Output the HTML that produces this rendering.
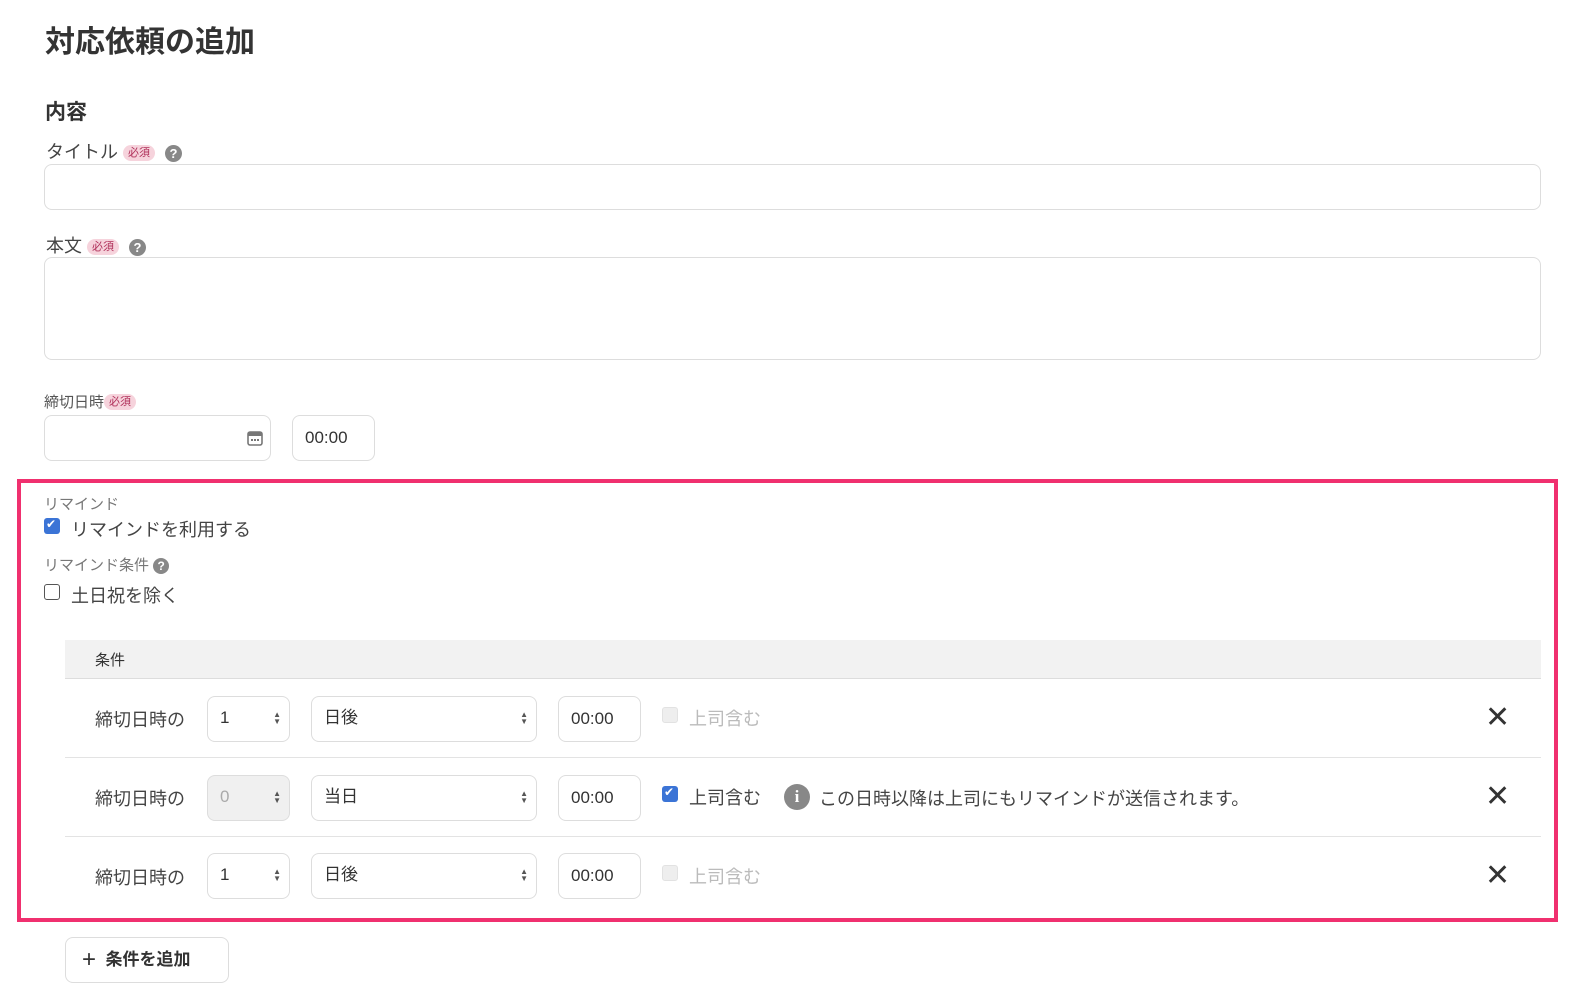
<!DOCTYPE html>
<html><head><meta charset="utf-8"><style>
*{box-sizing:border-box;margin:0;padding:0}
body{width:1576px;height:997px;background:#fff;font-family:"Liberation Sans","Noto Sans CJK JP",sans-serif;color:#333;position:relative;overflow:hidden}
.a{position:absolute}
.inp{position:absolute;border:1px solid #ddd;border-radius:8px;background:#fff}
.req{display:inline-block;background:#f6d3dc;color:#b0305a;font-size:11px;border-radius:8px;padding:0 5px;line-height:16px;vertical-align:2px}
.q{display:inline-block;width:17px;height:17px;border-radius:50%;background:#888;color:#fff;font-size:13px;font-weight:bold;text-align:center;line-height:17px;vertical-align:0}
.lbl{font-size:18px;color:#444}
.sel{font-size:17px;color:#333;padding-left:12px;line-height:44px}
.arr{position:absolute;right:8px;top:14px;font-size:8px;line-height:7px;color:#555}
.cb{position:absolute;width:16px;height:16px;border-radius:3px}
.x{position:absolute;left:1485px;font-size:30px;color:#333;line-height:30px}
</style></head><body>
<div class="a" style="left:45px;top:17px;font-size:30px;font-weight:bold;color:#333">対応依頼の追加</div>
<div class="a" style="left:45px;top:96px;font-size:21px;font-weight:bold">内容</div>
<div class="a lbl" style="left:46px;top:138px">タイトル <span class="req">必須</span> &nbsp;<span class="q">?</span></div>
<div class="inp" style="left:44px;top:164px;width:1497px;height:46px"></div>
<div class="a lbl" style="left:46px;top:232px">本文 <span class="req">必須</span> &nbsp;<span class="q">?</span></div>
<div class="inp" style="left:44px;top:257px;width:1497px;height:103px"></div>
<div class="a" style="left:44px;top:391px;font-size:15px;color:#555">締切日時<span class="req">必須</span></div>
<div class="inp" style="left:44px;top:415px;width:227px;height:46px"><svg class="a" style="left:202px;top:14px" width="16" height="16" viewBox="0 0 16 16"><rect x="1" y="2" width="14" height="13" rx="2" fill="none" stroke="#777" stroke-width="1.6"/><rect x="1" y="2" width="14" height="4" fill="#777"/><rect x="4" y="9" width="2" height="2" fill="#777"/><rect x="7" y="9" width="2" height="2" fill="#777"/><rect x="10" y="9" width="2" height="2" fill="#777"/></svg></div>
<div class="inp sel" style="left:292px;top:415px;width:83px;height:46px">00:00</div>
<div class="a" style="left:17px;top:479px;width:1541px;height:443px;border:4px solid #f0306f"></div>
<div class="a" style="left:44px;top:493px;font-size:15px;color:#777">リマインド</div>
<div class="cb" style="left:44px;top:518px;background:#3b74d6"><span style="color:#fff;font-size:12px;position:absolute;left:2px;top:-1px">✔</span></div>
<div class="a lbl" style="left:71px;top:516px">リマインドを利用する</div>
<div class="a" style="left:44px;top:554px;font-size:15px;color:#777">リマインド条件 <span class="q" style="width:16px;height:16px;line-height:16px;font-size:12px">?</span></div>
<div class="cb" style="left:44px;top:584px;border:1.5px solid #555"></div>
<div class="a lbl" style="left:71px;top:582px">土日祝を除く</div>
<div class="a" style="left:65px;top:640px;width:1476px;height:39px;background:#f2f2f2;border-bottom:1px solid #ddd"></div>
<div class="a" style="left:95px;top:649px;font-size:15px">条件</div>
<div class="a" style="left:65px;top:757px;width:1476px;height:1px;background:#e3e3e3"></div>
<div class="a" style="left:65px;top:836px;width:1476px;height:1px;background:#e3e3e3"></div>

<div class="a lbl" style="left:95px;top:706px">締切日時の</div>
<div class="inp sel" style="left:207px;top:696px;width:83px;height:46px;line-height:42px">1<div class="arr">▲<br>▼</div></div>
<div class="inp sel" style="left:311px;top:696px;width:226px;height:46px;line-height:42px">日後<div class="arr">▲<br>▼</div></div>
<div class="inp sel" style="left:558px;top:696px;width:83px;height:46px">00:00</div>
<div class="cb" style="left:662px;top:707px;background:#eee;border:1px solid #e2e2e2"></div>
<div class="a lbl" style="left:689px;top:705px;color:#bbb">上司含む</div>
<div class="x" style="top:703px">✕</div>

<div class="a lbl" style="left:95px;top:785px">締切日時の</div>
<div class="inp sel" style="left:207px;top:775px;width:83px;height:46px;line-height:42px;background:#f0f0f0;color:#aaa">0<div class="arr">▲<br>▼</div></div>
<div class="inp sel" style="left:311px;top:775px;width:226px;height:46px;line-height:42px">当日<div class="arr">▲<br>▼</div></div>
<div class="inp sel" style="left:558px;top:775px;width:83px;height:46px">00:00</div>
<div class="cb" style="left:662px;top:786px;background:#3b74d6"><span style="color:#fff;font-size:12px;position:absolute;left:2px;top:-1px">✔</span></div>
<div class="a lbl" style="left:689px;top:784px">上司含む</div>
<div class="a" style="left:784px;top:784px;width:26px;height:26px;border-radius:50%;background:#888;color:#fff;font-weight:bold;font-size:17px;text-align:center;line-height:26px;font-family:'Liberation Serif',serif">i</div>
<div class="a lbl" style="left:819px;top:785px">この日時以降は上司にもリマインドが送信されます。</div>
<div class="x" style="top:782px">✕</div>

<div class="a lbl" style="left:95px;top:864px">締切日時の</div>
<div class="inp sel" style="left:207px;top:853px;width:83px;height:46px;line-height:42px">1<div class="arr">▲<br>▼</div></div>
<div class="inp sel" style="left:311px;top:853px;width:226px;height:46px;line-height:42px">日後<div class="arr">▲<br>▼</div></div>
<div class="inp sel" style="left:558px;top:853px;width:83px;height:46px">00:00</div>
<div class="cb" style="left:662px;top:865px;background:#eee;border:1px solid #e2e2e2"></div>
<div class="a lbl" style="left:689px;top:863px;color:#bbb">上司含む</div>
<div class="x" style="top:861px">✕</div>

<div class="inp" style="left:65px;top:937px;width:164px;height:46px;font-size:17px;font-weight:bold;line-height:44px;padding-left:16px"><span style="font-size:24px;font-weight:normal;vertical-align:-2px">+</span>&nbsp; 条件を追加</div>
</body></html>
